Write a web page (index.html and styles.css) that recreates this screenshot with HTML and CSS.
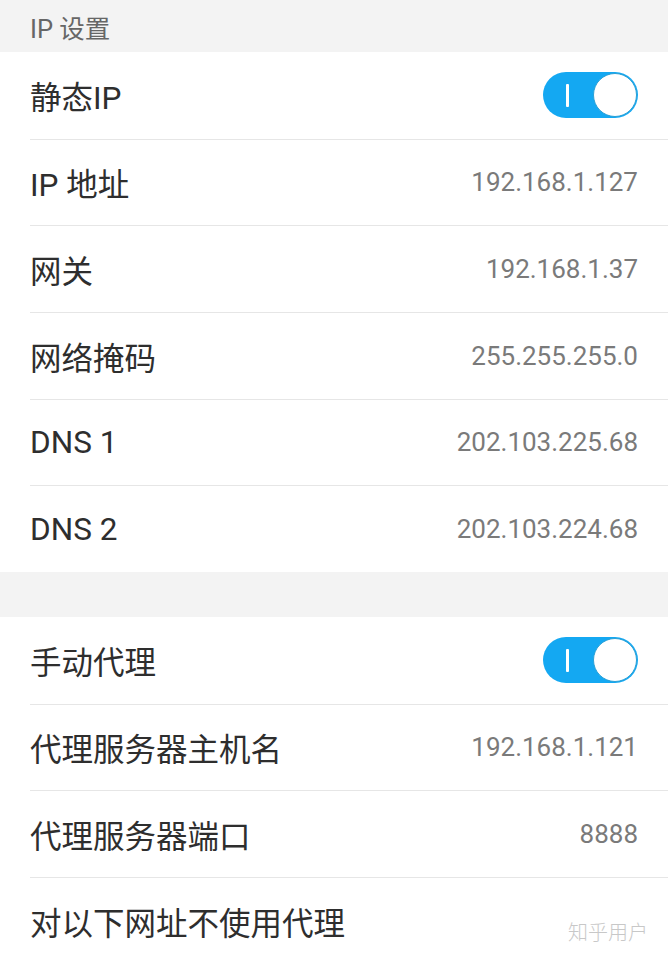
FILE: index.html
```html
<!DOCTYPE html>
<html lang="zh-CN">
<head>
<meta charset="utf-8">
<title>IP 设置</title>
<link rel="stylesheet" href="styles.css">
</head>
<body>
<div class="screen">
  <div class="section-title">IP 设置</div>
  <ul class="group">
    <li class="row">
      <span class="label">静态IP</span>
      <span class="switch on"><span class="switch-mark"></span><span class="switch-knob"></span></span>
    </li>
    <li class="row"><span class="label">IP 地址</span><span class="value">192.168.1.127</span></li>
    <li class="row"><span class="label">网关</span><span class="value">192.168.1.37</span></li>
    <li class="row"><span class="label">网络掩码</span><span class="value">255.255.255.0</span></li>
    <li class="row"><span class="label">DNS 1</span><span class="value">202.103.225.68</span></li>
    <li class="row"><span class="label">DNS 2</span><span class="value">202.103.224.68</span></li>
  </ul>
  <div class="spacer"></div>
  <ul class="group">
    <li class="row">
      <span class="label">手动代理</span>
      <span class="switch on"><span class="switch-mark"></span><span class="switch-knob"></span></span>
    </li>
    <li class="row"><span class="label">代理服务器主机名</span><span class="value">192.168.1.121</span></li>
    <li class="row"><span class="label">代理服务器端口</span><span class="value">8888</span></li>
    <li class="row"><span class="label">对以下网址不使用代理</span></li>
  </ul>
  <div class="watermark">知乎用户</div>
</div>
</body>
</html>
```

FILE: styles.css
```css
html, body {
  margin: 0;
  padding: 0;
  background: #ffffff;
}

.screen {
  position: relative;
  width: 668px;
  height: 960px;
  overflow: hidden;
  background: #ffffff;
  font-family: Roboto, "Noto Sans CJK SC", sans-serif;
}

.section-title {
  height: 52px;
  box-sizing: border-box;
  padding-left: 30px;
  display: flex;
  align-items: center;
  background: #f3f3f3;
  color: #666666;
  font-size: 25.5px;
}

.group {
  list-style: none;
  margin: 0;
  padding: 0;
  background: #ffffff;
}

.row {
  height: 86.67px;
  box-sizing: border-box;
  margin-left: 30px;
  padding-right: 30px;
  display: flex;
  align-items: center;
  justify-content: space-between;
  border-top: 1px solid #e6e6e6;
}

.row:first-child {
  border-top: none;
}

.label {
  color: #2e2e2e;
  font-size: 31.5px;
}

.value {
  color: #7a7a7a;
  font-size: 26px;
}

.spacer {
  height: 45px;
  background: #f3f3f3;
}

.switch {
  position: relative;
  width: 95px;
  height: 46px;
  border-radius: 23px;
  background: #14a8f2;
  flex-shrink: 0;
}

.switch-mark {
  position: absolute;
  left: 23px;
  top: 12px;
  width: 3px;
  height: 23px;
  border-radius: 1px;
  background: #ffffff;
}

.switch-knob {
  position: absolute;
  right: 1px;
  top: 1px;
  width: 42px;
  height: 42px;
  border-radius: 50%;
  background: #ffffff;
  border: 1px solid #2aa0d6;
}

.watermark {
  position: absolute;
  right: 20px;
  bottom: 14px;
  color: #c8c8c8;
  font-size: 20px;
  font-family: "Noto Sans CJK SC", sans-serif;
  font-weight: 300;
}
```
